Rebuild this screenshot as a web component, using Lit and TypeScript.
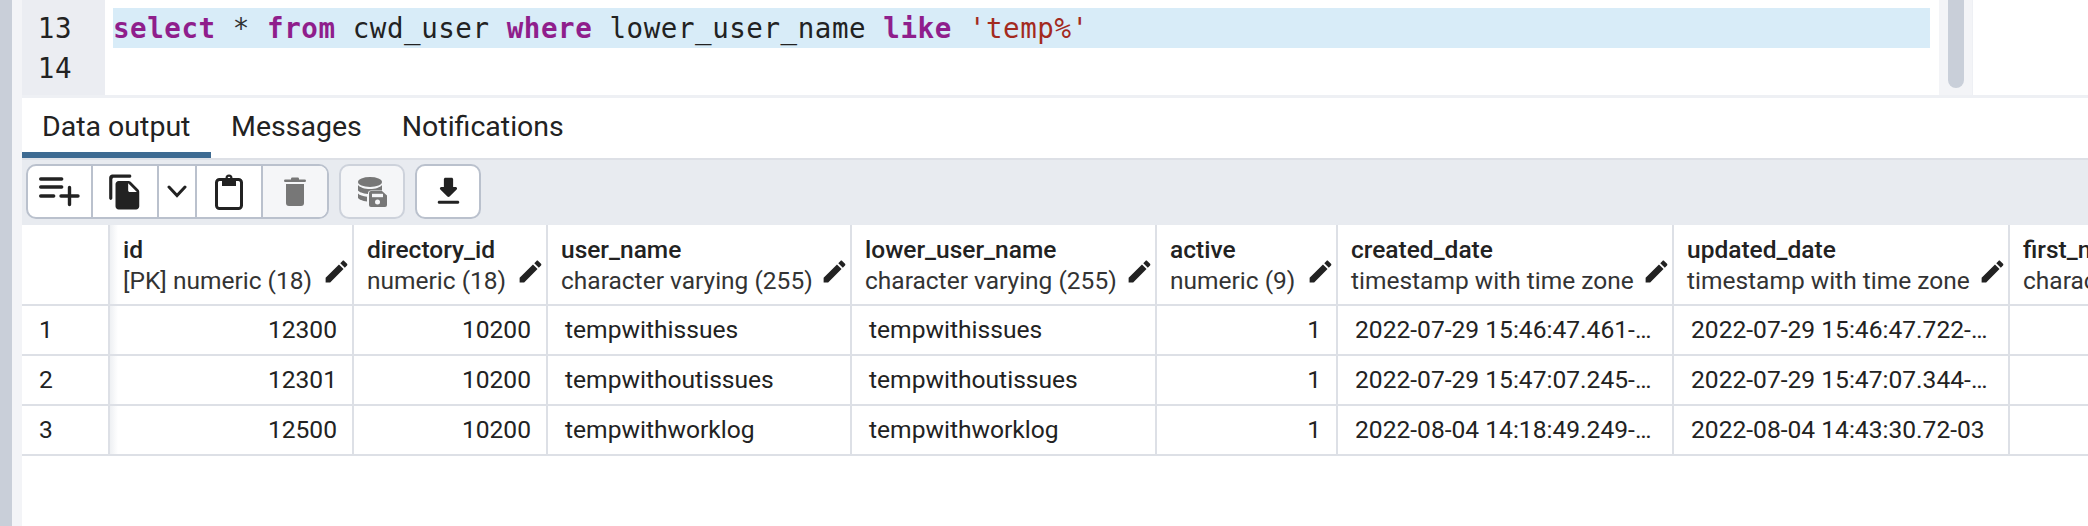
import { LitElement, html, css, svg } from "lit";
import { customElement } from "lit/decorators.js";

const PENCIL = svg`<path d="M3 17.25V21h3.75L17.81 9.94l-3.75-3.75L3 17.25zM20.71 7.04c.39-.39.39-1.02 0-1.41l-2.34-2.34c-.39-.39-1.02-.39-1.41 0l-1.83 1.83 3.75 3.75 1.83-1.83z"/>`;

const COLUMNS = [
  { name: "id", type: "[PK] numeric (18)" },
  { name: "directory_id", type: "numeric (18)" },
  { name: "user_name", type: "character varying (255)" },
  { name: "lower_user_name", type: "character varying (255)" },
  { name: "active", type: "numeric (9)" },
  { name: "created_date", type: "timestamp with time zone" },
  { name: "updated_date", type: "timestamp with time zone" },
  { name: "first_name", type: "character varying (255)" },
];

const ROWS = [
  ["12300", "10200", "tempwithissues", "tempwithissues", "1", "2022-07-29 15:46:47.461-03", "2022-07-29 15:46:47.722-03", ""],
  ["12301", "10200", "tempwithoutissues", "tempwithoutissues", "1", "2022-07-29 15:47:07.245-03", "2022-07-29 15:47:07.344-03", ""],
  ["12500", "10200", "tempwithworklog", "tempwithworklog", "1", "2022-08-04 14:18:49.249-03", "2022-08-04 14:43:30.72-03", ""],
];

const RIGHT = new Set([0, 1, 4]);

@customElement("app-root")
export class AppRoot extends LitElement {
  static styles = css`
    :host {
      display: flex;
      width: 2088px;
      height: 526px;
      overflow: hidden;
      background: #fff;
      font-family: Roboto, "Liberation Sans", sans-serif;
      color: #222;
    }
    .rail { width: 12px; flex: none; background: #c9cfd9; }
    .strip { width: 10px; flex: none; background: #f3f4f7; }
    .main { flex: 1; min-width: 0; display: flex; flex-direction: column; }

    .editor { height: 95px; flex: none; display: flex; }
    .gutter {
      width: 83px; flex: none; background: #ebedf2; padding-top: 8px;
      font: 27.5px/40px "DejaVu Sans Mono", monospace; letter-spacing: 0.56px; color: #222;
    }
    .gutter div { width: 50px; text-align: right; }
    .code {
      width: 1834px; flex: none; padding: 8px 0 0 8px; box-sizing: border-box;
    }
    .line {
      height: 40px; width: 1817px; background: #d8ecf8; white-space: pre;
      font: 27.5px/40px "DejaVu Sans Mono", monospace; letter-spacing: 0.56px; color: #222;
    }
    .k { color: #8f1e8c; font-weight: 700; }
    .s { color: #a32a1e; }
    .op { color: #333; }
    .track { width: 33px; flex: none; background: #f3f4f7; display: flex; justify-content: center; }
    .thumb { width: 16px; height: 88px; background: #c9cfd9; border-radius: 0 0 8px 8px; }
    .pane { flex: 1; background: #fff; border-left: 1px solid #eef0f4; }

    .tabs {
      height: 65px; flex: none; box-sizing: border-box; display: flex;
      border-top: 3px solid #eef0f4; border-bottom: 2px solid #dde0e6;
    }
    .tab {
      font-size: 28.5px; line-height: 58px; padding: 0 20px; color: #222; height: 60px; box-sizing: border-box;
    }
    .tab.on { border-bottom: 6px solid #3d6a91; width: 189px; padding-left: 20px; }

    .toolbar {
      height: 65px; flex: none; background: #e8ebf0; display: flex; gap: 10px;
      padding: 4px 0 0 4px; box-sizing: border-box;
    }
    .group {
      height: 55px; display: flex; border: 2px solid #bac1cd; border-radius: 10px;
      background: #fff; overflow: hidden; box-sizing: border-box;
    }
    .group.off { border-color: #cdd2db; background: #f5f6f8; }
    .btn {
      display: flex; align-items: center; justify-content: center; flex: none;
      border-right: 2px solid #bac1cd; box-sizing: border-box;
    }
    .btn:last-child { border-right: none; }
    .btn.off { background: #f5f6f8; }
    .btn svg { fill: #222; display: block; flex: none; }
    .off svg { fill: #777; }
    .ln { fill: none; stroke: #222; stroke-linecap: round; }
    .hole { fill: #f5f6f8; }

    .table { display: grid; grid-template-columns: 88px 244px 194px 304px 305px 181px 336px 336px 120px; }
    .hd {
      height: 81px; box-sizing: border-box; position: relative;
      border-right: 2px solid #dde0e6; border-bottom: 2px solid #dde0e6;
      padding: 9px 0 0 13px; white-space: nowrap; overflow: hidden;
    }
    .hd.first, .num { background: #fff; }
    .name { font-size: 24.5px; font-weight: 500; line-height: 31px; color: #222; }
    .type { font-size: 24.5px; line-height: 31px; color: #333; }
    .edit { position: absolute; right: 1px; top: 32px; width: 29px; height: 29px; fill: #222; }
    .cell {
      height: 50px; box-sizing: border-box; border-right: 2px solid #dde0e6; border-bottom: 2px solid #dde0e6;
      font-size: 24.6px; line-height: 48px; padding: 0 16px 0 17px; color: #222;
      white-space: nowrap; overflow: hidden; text-overflow: ellipsis;
    }
    .cell.r { text-align: right; padding-right: 15px; }
    .shade { position: relative; }
    .shade::before {
      content: ""; position: absolute; left: 0; top: 0; bottom: 0; width: 8px;
      background: linear-gradient(90deg, #eef0f3, #fff);
    }
  `;

  private btn(w: number, body: unknown, off = false) {
    return html`<div class="btn ${off ? "off" : ""}" style="width:${w}px">${body}</div>`;
  }

  render() {
    return html`
      <div class="rail"></div>
      <div class="strip"></div>
      <div class="main">
        <div class="editor">
          <div class="gutter"><div>13</div><div>14</div></div>
          <div class="code">
            <div class="line"><span class="k">select</span> <span class="op">*</span> <span class="k">from</span> cwd_user <span class="k">where</span> lower_user_name <span class="k">like</span> <span class="s">'temp%'</span></div>
          </div>
          <div class="track"><div class="thumb"></div></div>
          <div class="pane"></div>
        </div>
        <div class="tabs">
          <div class="tab on">Data output</div>
          <div class="tab">Messages</div>
          <div class="tab">Notifications</div>
        </div>
        <div class="toolbar">
          <div class="group">
            ${this.btn(65, html`<svg width="41" height="32" viewBox="0 0 41 32"><path class="ln" stroke-width="3.4" d="M1.700 3h21M1.700 11h21M1.700 20h13M22 20h17M30.500 11.500v17"/></svg>`)}
            ${this.btn(66, html`<svg width="38" height="38" viewBox="0 0 24 24"><path d="M15 1H4c-1.100 0-2 .9-2 2v13c0 .55.45 1 1 1s1-.45 1-1V4c0-.55.45-1 1-1h10c.55 0 1-.45 1-1s-.45-1-1-1zm.59 4.590 4.830 4.830c.37.37.58.88.58 1.410V21c0 1.100-.9 2-2 2H7.990C6.890 23 6 22.100 6 21l.01-14c0-1.100.89-2 1.990-2h6.170c.53 0 1.040.21 1.420.59zM15 12h4.500L14 6.500V11c0 .55.45 1 1 1z"/></svg>`)}
            ${this.btn(38, html`<svg width="20" height="13" viewBox="0 0 20 13"><path class="ln" stroke-width="3" d="M2 2l8 8.500L18 2"/></svg>`)}
            ${this.btn(66, html`<svg width="28" height="36" viewBox="0 0 28 36"><rect class="ln" x="1.500" y="5.500" width="25" height="29" rx="3" stroke-width="3"/><path fill-rule="evenodd" d="M7 4h3.500a3.500 3.500 0 0 1 7 0H21v8H7zM14 2.700a1.300 1.300 0 1 0 0 2.600 1.300 1.300 0 0 0 0-2.600z"/></svg>`)}
            ${this.btn(64, html`<svg width="22" height="29" viewBox="0 0 22 29"><rect x="0" y="2.500" width="22" height="2.600" rx="1.300"/><rect x="7" y="0.500" width="8" height="3" rx="1.200"/><path d="M2 7h18v19a3 3 0 0 1-3 3H5a3 3 0 0 1-3-3z"/></svg>`, true)}
          </div>
          <div class="group off">
            ${this.btn(62, html`<svg width="29" height="30" viewBox="0 0 29 30"><ellipse cx="12" cy="5" rx="12" ry="5"/><path d="M0 8c2 2.500 6.500 4 12 4s10-1.500 12-4v5.500H13a3 3 0 0 0-3 3v.4C4.500 16.500 1 15 0 13.500zM0 16.500c1.500 1.800 5 2.800 9 3.200v4.700C4.500 24 1 22.500 0 21z"/><path d="M13 14h11l5 4.500V28a2 2 0 0 1-2 2H13a2 2 0 0 1-2-2V16a2 2 0 0 1 2-2z"/><rect class="hole" x="14" y="16.800" width="11" height="3.400"/><circle class="hole" cx="19.500" cy="25" r="2.500"/></svg>`)}
          </div>
          <div class="group">
            ${this.btn(62, html`<svg width="37" height="37" viewBox="0 0 24 24"><path d="M16.590 9H15V4c0-.55-.45-1-1-1h-4c-.55 0-1 .45-1 1v5H7.410c-.89 0-1.340 1.080-.71 1.710l4.590 4.590c.39.39 1.020.39 1.410 0l4.590-4.590c.63-.63.19-1.710-.7-1.710zM5 19c0 .55.45 1 1 1h12c.55 0 1-.45 1-1s-.45-1-1-1H6c-.55 0-1 .45-1 1z"/></svg>`)}
          </div>
        </div>
        <div class="table">
          <div class="hd first"></div>
          ${COLUMNS.map(
            (c, i) => html`<div class="hd ${i === 0 ? "shade" : ""}">
              <div class="name">${c.name}</div>
              <div class="type">${c.type}</div>
              ${i < 7 ? html`<svg class="edit" viewBox="0 0 24 24">${PENCIL}</svg>` : ""}
            </div>`
          )}
          ${ROWS.map(
            (r, ri) => html`<div class="cell num">${ri + 1}</div>
              ${r.map(
                (v, i) => html`<div class="cell ${RIGHT.has(i) ? "r" : ""} ${i === 0 ? "shade" : ""}">${v}</div>`
              )}`
          )}
        </div>
      </div>
    `;
  }
}
